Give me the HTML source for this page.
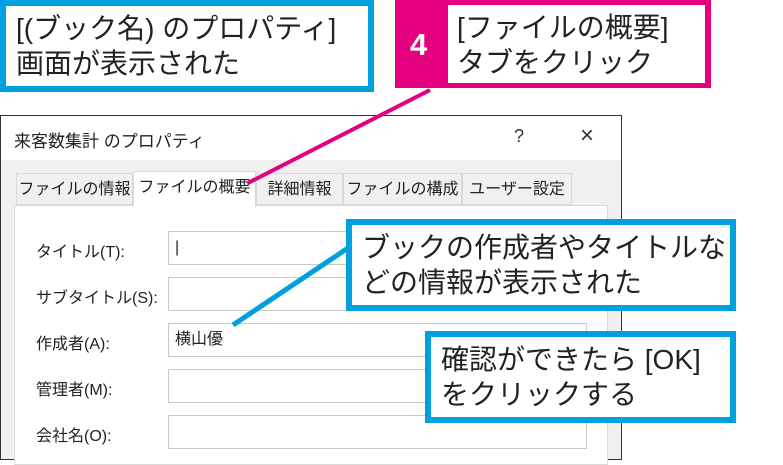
<!DOCTYPE html>
<html><head><meta charset="utf-8"><style>
body{margin:0;width:783px;height:455px;background:#fff;position:relative;overflow:hidden;font-family:"Liberation Sans","Noto Sans CJK JP",sans-serif;}
.a{position:absolute;}
.call{position:absolute;box-sizing:border-box;border:6px solid #00a0e0;background:#fff;color:#222;font-size:28px;line-height:35px;padding:5px 0 0 10px;white-space:nowrap;}
.dlg{left:0;top:115px;width:622px;height:345px;border:1px solid #333;background:#f0f0f0;box-sizing:border-box;}
.tab{position:absolute;top:173px;height:32px;border:1px solid #d9d9d9;background:#f0f0f0;font-size:16px;line-height:32px;text-align:center;color:#222;box-sizing:border-box;white-space:nowrap;}
.lbl{position:absolute;left:36px;font-size:16px;color:#222;}
.inp{position:absolute;left:168px;width:419px;height:34px;border:1px solid #c8c8c8;background:#fff;box-sizing:border-box;font-size:16px;line-height:32px;padding-left:6px;color:#222;}
</style></head><body>
<div class="a dlg"></div>
<div class="a" style="left:1px;top:116px;width:620px;height:44px;background:#fff"></div>
<div class="a" style="left:14px;top:127px;font-size:17px;color:#222">来客数集計 のプロパティ</div>
<div class="a" style="left:514px;top:126px;font-size:18px;color:#333">?</div>
<div class="a" style="left:580px;top:122px;font-size:24px;color:#333;font-weight:300">×</div>
<div class="a" style="left:14px;top:205px;width:594px;height:260px;background:#fff;border:1px solid #d9d9d9;box-sizing:border-box"></div>
<div class="tab" style="left:16px;width:117px">ファイルの情報</div>
<div class="tab" style="left:133px;width:123px;top:171px;height:36px;background:#fff;border-bottom:none">ファイルの概要</div>
<div class="tab" style="left:256px;width:87px">詳細情報</div>
<div class="tab" style="left:343px;width:119px">ファイルの構成</div>
<div class="tab" style="left:462px;width:110px">ユーザー設定</div>
<div class="lbl" style="top:238px">タイトル(T):</div>
<div class="inp" style="top:231px">|</div>
<div class="lbl" style="top:284px">サブタイトル(S):</div>
<div class="inp" style="top:277px"></div>
<div class="lbl" style="top:330px">作成者(A):</div>
<div class="inp" style="top:323px">横山優</div>
<div class="lbl" style="top:376px">管理者(M):</div>
<div class="inp" style="top:369px"></div>
<div class="lbl" style="top:422px">会社名(O):</div>
<div class="inp" style="top:415px"></div>
<svg class="a" style="left:0;top:0" width="783" height="455">
<line x1="430" y1="90" x2="248" y2="183" stroke="#e4007f" stroke-width="4"/>
<line x1="233" y1="325" x2="348" y2="248" stroke="#00a0e0" stroke-width="5"/>
</svg>
<div class="call" style="left:0;top:0;width:374px;height:92px">[(ブック名) のプロパティ]<br>画面が表示された</div>
<div class="a" style="left:395px;top:0;width:316px;height:88px;background:#e4007f"></div>
<div class="a" style="left:448px;top:5px;width:257px;height:78px;background:#fff"></div>
<div class="a" style="left:410px;top:27px;font-size:31px;font-weight:bold;color:#fff">4</div>
<div class="a" style="left:457px;top:10px;font-size:28px;line-height:35px;color:#222;white-space:nowrap">[ファイルの概要]<br>タブをクリック</div>
<div class="call" style="left:346px;top:219px;width:390px;height:92px">ブックの作成者やタイトルな<br>どの情報が表示された</div>
<div class="call" style="left:425px;top:331px;width:311px;height:92px">確認ができたら [OK]<br>をクリックする</div>
</body></html>
